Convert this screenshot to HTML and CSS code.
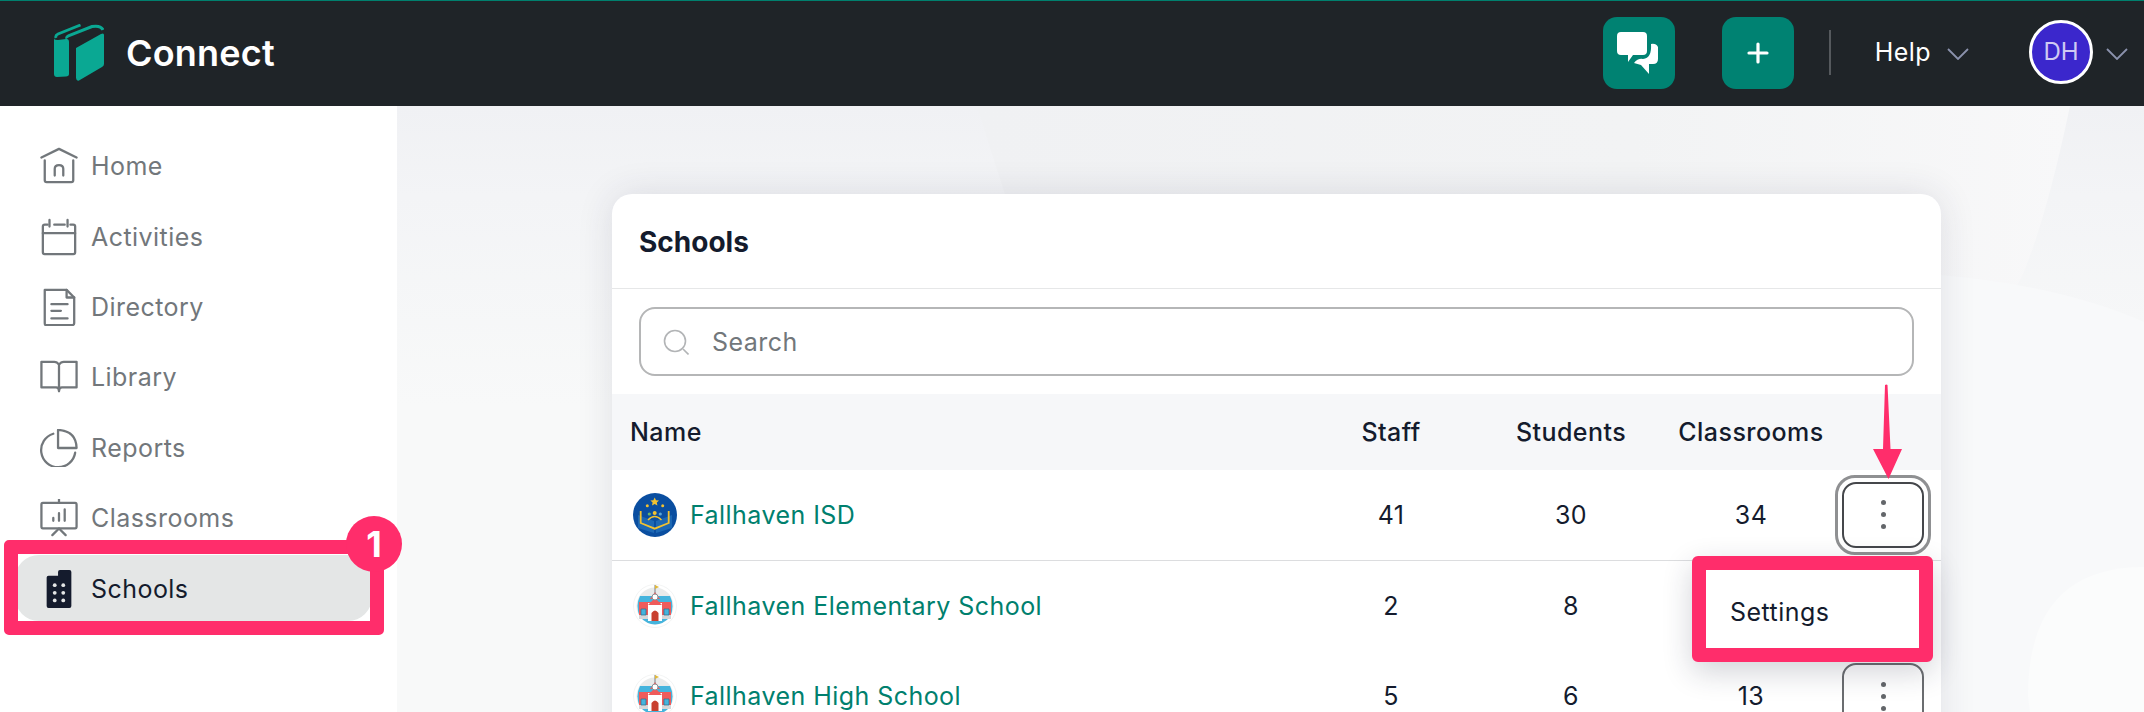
FILE: index.html
```html
<!DOCTYPE html>
<html lang="en">
<head>
<meta charset="utf-8">
<title>Connect - Schools</title>
<link rel="stylesheet" href="styles.css">
</head>
<body>
<div class="page">
  <header class="topbar">
    <div class="brand">
      <svg class="logo" viewBox="0 0 50 57" width="50" height="57">
        <path fill="#0aa893" d="M0 15 L0 50 Q0 53 3 53 L12 52.500 Q15 52 15 50 L15 18 Q15 14.500 12 15 L4 16 Q1 16 0 15Z"/>
        <path fill="#0aa893" d="M22 24 L47 10 Q50 8.500 50 11 L50 40 Q50 42 48 43 L25 56.500 Q22.500 57.500 22 54Z"/>
        <path fill="none" stroke="#0aa893" stroke-width="2.800" d="M2 14 Q1 11.500 4 10 L26.500 1"/>
        <path fill="none" stroke="#0aa893" stroke-width="3" d="M13 14.500 Q12 13 15 11.500 L38 2.500 Q47 1 49 6"/>
      </svg>
      <span class="brand-name">Connect</span>
    </div>
    <div class="top-actions">
      <button class="square-btn chat-btn" aria-label="Messages">
        <svg viewBox="0 0 44 44" width="44" height="44">
          <path fill="#fff" d="M4 1 H26 Q30 1 30 5 V20 Q30 24 26 24 H16 L11 31 V24 H4 Q0 24 0 20 V5 Q0 1 4 1Z"/>
          <path fill="#fff" d="M34 13 Q39 12 41 16 V28 Q41 33 36 33 H32 V43 L24 34 L17 32 Q21 27 26 28 Q35 27 34 13Z"/>
        </svg>
      </button>
      <button class="square-btn plus-btn" aria-label="Add">
        <svg viewBox="0 0 22 22" width="22" height="22"><path fill="none" stroke="#fff" stroke-width="3.200" stroke-linecap="round" d="M11 2 V20 M2 11 H20"/></svg>
      </button>
      <span class="divider"></span>
      <span class="help">Help</span>
      <svg class="chev" viewBox="0 0 22 12" width="22" height="12"><path fill="none" stroke="#8b92ad" stroke-width="1.800" d="M1 1 L11 11 L21 1"/></svg>
      <span class="avatar">DH</span>
      <svg class="chev chev-user" viewBox="0 0 22 12" width="22" height="12"><path fill="none" stroke="#8b92ad" stroke-width="1.800" d="M1 1 L11 11 L21 1"/></svg>
    </div>
  </header>

  <div class="shell">
    <aside class="sidebar">
      <nav class="nav">
        <a class="nav-item">
          <svg class="nav-icon" viewBox="0 0 40 40" fill="none" stroke="#72777b" stroke-width="2.400" stroke-linecap="round" stroke-linejoin="round"><path d="M1.500 11 L20 2 L38.500 11"/><path d="M5 14 V35 Q5 37 7 37 H33 Q35 37 35 35 V14"/><path d="M15.500 30 V23 Q15.500 19 20 19 Q24.500 19 24.500 23 V30"/></svg>
          <span>Home</span>
        </a>
        <a class="nav-item">
          <svg class="nav-icon" viewBox="0 0 40 40" fill="none" stroke="#72777b" stroke-width="2.400" stroke-linecap="round" stroke-linejoin="round"><path d="M8 7 H5 Q3 7 3 9 V36 Q3 38 5 38 H35 Q37 38 37 36 V9 Q37 7 35 7 H32"/><path d="M15 7 H26"/><path d="M10 2 V9 M29 2 V9"/><path d="M3 16 H37"/></svg>
          <span>Activities</span>
        </a>
        <a class="nav-item">
          <svg class="nav-icon" viewBox="0 0 40 40" fill="none" stroke="#72777b" stroke-width="2.400" stroke-linecap="round" stroke-linejoin="round"><path d="M5 2 H28 L36 10 V37 Q36 39 34 39 H6 Q5 39 5 37Z"/><path d="M28 2 V10 H36"/><path d="M12 17 H29 M12 24 H22 M12 32 H29"/></svg>
          <span>Directory</span>
        </a>
        <a class="nav-item">
          <svg class="nav-icon" viewBox="0 0 40 40" fill="none" stroke="#72777b" stroke-width="2.400" stroke-linecap="round" stroke-linejoin="round"><path d="M20 7 Q18 4 15 4 H1.500 V31 H17 Q20 31 20 35 Q20 31 23 31 H38.500 V4 H25 Q22 4 20 7 V34"/></svg>
          <span>Library</span>
        </a>
        <a class="nav-item">
          <svg class="nav-icon" viewBox="0 0 40 40" fill="none" stroke="#72777b" stroke-width="2.400" stroke-linecap="round" stroke-linejoin="round"><path d="M14 5 A18 18 0 1 0 37 25"/><path d="M19 1 V20 H38.500 Q38 2 19 1Z"/></svg>
          <span>Reports</span>
        </a>
        <a class="nav-item">
          <svg class="nav-icon" viewBox="0 0 40 40" fill="none" stroke="#72777b" stroke-width="2.400" stroke-linecap="round" stroke-linejoin="round"><path d="M3 4 H37 Q38.500 4 38.500 6 V29 Q38.500 31 37 31 H3 Q1.500 31 1.500 29 V6 Q1.500 4 3 4Z"/><path d="M20 0 V4 M20 31 L13 38 M20 31 L27 38"/><path d="M14 23 V20 M20 23 V15 M26 23 V11"/></svg>
          <span>Classrooms</span>
        </a>
        <a class="nav-item nav-item-active">
          <svg class="nav-icon" viewBox="0 0 40 40"><path fill="#141b2d" d="M9 6 H19 V2 Q19 0 21 0 H31 Q33 0 33 2 V38 Q33 40 31 40 H9 Q7 40 7 38 V8 Q7 6 9 6Z"/><g fill="#e4e6e6"><circle cx="15.500" cy="16" r="2"/><circle cx="24.500" cy="16" r="2"/><circle cx="15.500" cy="24" r="2"/><circle cx="24.500" cy="24" r="2"/><circle cx="15.500" cy="32" r="2"/><circle cx="24.500" cy="32" r="2"/></g></svg>
          <span>Schools</span>
        </a>
      </nav>
    </aside>

    <main class="main">
      <svg class="bg-shapes" viewBox="0 0 1747 606" preserveAspectRatio="none" aria-hidden="true">
        <defs>
          <linearGradient id="topSweep" x1="0" y1="0" x2="1" y2="0">
            <stop offset="0" stop-color="#f0f1f3"/>
            <stop offset="0.6" stop-color="#f2f3f4"/>
            <stop offset="1" stop-color="#f8f8f9"/>
          </linearGradient>
        </defs>
        <path fill="url(#topSweep)" d="M580 0 H1673 Q1650 110 1626 168 L1560 300 H680 Q620 130 580 0Z"/>
        <path fill="#f8f9fa" d="M1400 606 V165 Q1620 160 1747 216 V606Z"/>
        <path fill="#fbfcfc" d="M1747 461 Q1631 461 1631 590 L1633 606 H1747Z"/>
      </svg>
      <section class="card">
        <h1 class="card-title">Schools</h1>
        <div class="search-wrap">
          <div class="search">
            <svg viewBox="0 0 26 26" width="26" height="26" fill="none" stroke="#b2b4b6" stroke-width="1.600"><circle cx="12" cy="12" r="10.500"/><path d="M20 20 L25.500 25.500"/></svg>
            <span class="search-text">Search</span>
          </div>
        </div>
        <div class="row row-head">
          <span class="cell-name">Name</span>
          <span class="cell-num">Staff</span>
          <span class="cell-num">Students</span>
          <span class="cell-num">Classrooms</span>
          <span></span>
        </div>
        <div class="row row-line">
          <a class="cell-name school">
            <svg class="school-icon" viewBox="0 0 44 44">
              <circle cx="22" cy="22" r="22" fill="#0a4ea0"/>
              <path fill="#1c68b4" d="M5 22 L21 28 V40 L5 35Z M39 22 L23 28 V40 L39 35Z"/>
              <path fill="none" stroke="#f2c230" stroke-width="1.800" d="M7.700 18 V30 L21.700 35.700 L35.700 30 V18"/>
              <path fill="#f2c230" d="M21.700 4.500 L23 7.200 L26 7.600 L23.800 9.600 L24.400 12.500 L21.700 11 L19 12.500 L19.600 9.600 L17.400 7.600 L20.400 7.200Z"/>
              <circle cx="14.300" cy="12.700" r="1.500" fill="#f2c230"/><circle cx="29.700" cy="12.700" r="1.500" fill="#f2c230"/>
              <circle cx="21.700" cy="20" r="2" fill="#f2c230"/><circle cx="16.300" cy="21" r="1.600" fill="#6cb468"/><circle cx="27.300" cy="21" r="1.600" fill="#5aa6d8"/>
              <path fill="none" stroke="#f2c230" stroke-width="1.400" d="M15 27 Q21.700 20 28.500 27"/>
            </svg>
            <span>Fallhaven ISD</span>
          </a>
          <span class="cell-num">41</span>
          <span class="cell-num">30</span>
          <span class="cell-num">34</span>
          <span class="cell-act"><span class="dots-ring"><button class="dots-btn dots-btn-focus" aria-label="Actions"><i></i><i></i><i></i></button></span></span>
        </div>
        <div class="row">
          <a class="cell-name school">
            <svg class="school-icon" viewBox="0 0 44 44">
              <circle cx="22" cy="22" r="21.500" fill="#fff" stroke="#f3f4f4"/>
              <circle cx="22" cy="22" r="18.500" fill="#e9ebeb"/>
              <path fill="#45b4dd" d="M7 12 H37 Q42 22 37 33 Q30 40.500 22 40.500 Q14 40.500 7 33 Q2 22 7 12Z"/>
              <path fill="#ef5b5b" d="M6 18 H38 V31 H6Z"/>
              <path fill="#d4d7d9" d="M6 31 H38 V35 H6Z"/>
              <path fill="#fff" d="M15 19 H29 V37 H15Z"/>
              <path fill="#45b4dd" stroke="#2a6f8d" stroke-width=".7" d="M8 25 H13 V31 H8Z M31 25 H36 V31 H31Z"/>
              <path fill="#ef5b5b" d="M15 21 L22 14 L29 21Z"/>
              <path fill="#ef5b5b" d="M17 15 H27 L22 8Z"/>
              <circle cx="22" cy="13" r="3" fill="#fff" stroke="#8a8f94"/>
              <path fill="#c9402f" d="M18.500 37 V29 Q22 24 25.500 29 V37Z"/>
              <path stroke="#7a7f84" d="M22 9 V1"/><path fill="#e0b93a" d="M22 1 L26 3 L22 5Z"/>
            </svg>
            <span>Fallhaven Elementary School</span>
          </a>
          <span class="cell-num">2</span>
          <span class="cell-num">8</span>
          <span></span>
          <span></span>
        </div>
        <div class="row">
          <a class="cell-name school">
            <svg class="school-icon" viewBox="0 0 44 44">
              <circle cx="22" cy="22" r="21.500" fill="#fff" stroke="#f3f4f4"/>
              <circle cx="22" cy="22" r="18.500" fill="#e9ebeb"/>
              <path fill="#45b4dd" d="M7 12 H37 Q42 22 37 33 Q30 40.500 22 40.500 Q14 40.500 7 33 Q2 22 7 12Z"/>
              <path fill="#ef5b5b" d="M6 18 H38 V31 H6Z"/>
              <path fill="#d4d7d9" d="M6 31 H38 V35 H6Z"/>
              <path fill="#fff" d="M15 19 H29 V37 H15Z"/>
              <path fill="#45b4dd" stroke="#2a6f8d" stroke-width=".7" d="M8 25 H13 V31 H8Z M31 25 H36 V31 H31Z"/>
              <path fill="#ef5b5b" d="M15 21 L22 14 L29 21Z"/>
              <path fill="#ef5b5b" d="M17 15 H27 L22 8Z"/>
              <circle cx="22" cy="13" r="3" fill="#fff" stroke="#8a8f94"/>
              <path fill="#c9402f" d="M18.500 37 V29 Q22 24 25.500 29 V37Z"/>
              <path stroke="#7a7f84" d="M22 9 V1"/><path fill="#e0b93a" d="M22 1 L26 3 L22 5Z"/>
            </svg>
            <span>Fallhaven High School</span>
          </a>
          <span class="cell-num">5</span>
          <span class="cell-num">6</span>
          <span class="cell-num">13</span>
          <span class="cell-act"><button class="dots-btn" aria-label="Actions"><i></i><i></i><i></i></button></span>
        </div>
      </section>
    </main>
  </div>

  <div class="callout callout-nav"></div>
  <div class="badge">1</div>
  <svg class="arrow" viewBox="0 0 40 100" width="40" height="100">
    <path fill="#ff2d6b" d="M18 1 Q19.500 0 20.500 1 L23.500 65 L35 65 L21.500 95 L6 65 L16 65Z"/>
  </svg>
  <div class="menu"><span>Settings</span></div>
</div>
</body>
</html>
```
FILE: styles.css
```css
* { box-sizing: border-box; }
html, body { margin: 0; height: 100%; }
body { font-family: Inter, "Liberation Sans", sans-serif; color: #141b2d; overflow: hidden; background: #fff; }

.page { position: relative; width: 2144px; height: 712px; overflow: hidden; display: flex; flex-direction: column; }

.topbar { height: 106px; flex: none; background: #1f2428; border-top: 1px solid #00806e; display: flex; align-items: center; justify-content: space-between; padding: 0 16px 2px 54px; }
.brand { display: flex; align-items: center; gap: 22px; }
.logo { display: block; }
.brand-name { color: #fff; font-size: 36px; font-weight: 600; letter-spacing: 0.2px; }
.top-actions { display: flex; align-items: center; }
.square-btn { width: 72px; height: 72px; border: 0; padding: 0; border-radius: 14px; background: #008272; display: flex; align-items: center; justify-content: center; }
.chat-btn { margin-right: 47px; }
.divider { width: 2px; height: 45px; background: #55595d; margin: 0 44px 0 35px; }
.help { color: #fff; font-size: 25px; letter-spacing: 0.45px; margin-bottom: 2px; }
.chev { display: block; margin-left: 16px; margin-top: 2px; }
.avatar { width: 64px; height: 64px; border-radius: 50%; border: 3px solid #fff; background: #3b27cc; color: #cfcaf3; font-size: 24px; display: flex; align-items: center; justify-content: center; margin: 0 0 2px 60px; }
.chev-user { margin-left: 13px; }

.shell { flex: 1; display: flex; min-height: 0; }
.sidebar { width: 397px; flex: none; background: #fff; padding: 25px 25px 0 15px; }
.nav { display: flex; flex-direction: column; }
.nav-item { height: 70.400px; display: flex; align-items: center; gap: 13px; padding-left: 25px; font-size: 25px; letter-spacing: 0.45px; color: #72777b; }
.nav-icon { width: 38px; height: 38px; flex: none; }
.nav-item-active { height: 66px; margin-top: 2px; padding-top: 2px; color: #141b2d; background: #e4e6e6; border-radius: 24px; }

.main { position: relative; flex: 1; background: linear-gradient(to bottom, #f0f1f4 0, #f3f4f6 90px, #f8f9f9 300px); padding: 88px 0 0 215px; min-width: 0; }
.bg-shapes { position: absolute; inset: 0; width: 100%; height: 100%; }
.card { position: relative; width: 1329px; height: 600px; background: #fff; border-radius: 20px 20px 0 0; box-shadow: 0 0 36px rgba(40, 40, 70, 0.12); }
.card-title { margin: 0; height: 95px; padding: 2px 27px 0; display: flex; align-items: center; font-size: 28px; font-weight: 700; border-bottom: 1px solid #e6e7e8; }
.search-wrap { padding: 18px 27px 18px 27px; }
.search { height: 69px; border: 2px solid #b5b6b7; border-radius: 16px; display: flex; align-items: center; padding: 0 22px; gap: 23px; }
.search-text { font-size: 25px; letter-spacing: 0.45px; color: #72777b; }

.row { height: 90.500px; display: grid; grid-template-columns: 671px 180px 180px 180px 84px; padding-left: 18px; align-items: center; font-size: 25px; letter-spacing: 0.45px; }
.row-head { height: 76px; background: #f6f7f9; font-weight: 500; }
.row-line { border-bottom: 1px solid #dcdddf; }
.cell-num { text-align: center; }
.school { display: flex; align-items: center; gap: 13px; padding-left: 3px; color: #00806e; }
.school-icon { width: 44px; height: 44px; flex: none; }
.cell-act { display: flex; justify-content: center; }
.dots-btn { width: 82px; height: 66px; border: 2px solid #6b6d70; border-radius: 14px; background: #fff; padding: 0; display: flex; flex-direction: column; align-items: center; justify-content: center; gap: 7px; }
.dots-btn i { display: block; width: 5px; height: 5px; border-radius: 50%; background: #63666a; }
.dots-btn-focus { border-color: #45474b; }
.dots-ring { display: block; padding: 4px; border: 3px solid #8f9092; border-radius: 20px; margin: -7px; position: relative; }

.callout-nav { position: absolute; left: 4px; top: 540px; width: 380px; height: 95px; border: 14px solid #ff2d6b; border-radius: 5px; }
.badge { position: absolute; left: 346px; top: 516px; width: 56px; height: 56px; border-radius: 50%; background: #ff2d6b; color: #fff; font-size: 36px; font-weight: 700; display: flex; align-items: center; justify-content: center; }
.arrow { position: absolute; left: 1867px; top: 384px; }
.menu { position: absolute; left: 1692px; top: 556px; width: 241px; height: 106px; background: #fff; border: 14px solid #ff2d6b; border-radius: 6px; box-shadow: 0 10px 30px rgba(30, 35, 60, 0.2); padding: 6px 0 0 24px; display: flex; align-items: center; font-size: 25px; letter-spacing: 0.45px; }
```
